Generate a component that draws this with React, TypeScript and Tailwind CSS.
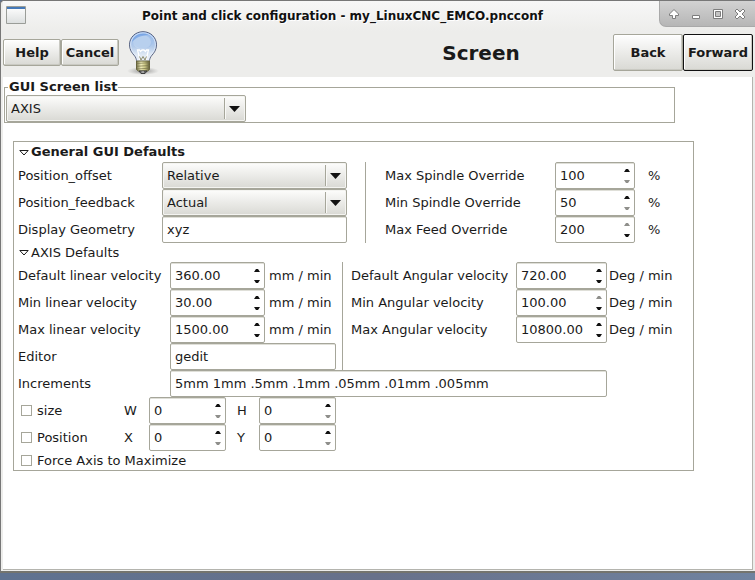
import { useId, useState, type ReactNode } from "react";

const field =
  "h-[27px] rounded-[2px] border border-[#a6a69a] bg-white text-[13px] text-[#1a1a1a] shadow-[inset_0_1px_0_#dfdfd8] outline-none";

function TextField({ label, value, className }: { label: string; value: string; className: string }) {
  const id = useId();
  return (
    <>
      <label htmlFor={id}>{label}</label>
      <input id={id} defaultValue={value} className={`${field} min-w-0 px-1 ${className}`} />
    </>
  );
}

function Dropdown({ id, label, options }: { id?: string; label?: string; options: string[] }) {
  return (
    <div className="relative h-[27px] w-full">
      <select
        id={id}
        aria-label={label}
        className="h-[27px] w-full appearance-none rounded-[2px] border border-[#a6a69a] bg-linear-to-b from-[#fdfdfc] to-[#d9d9d4] pr-6 pl-1 text-[13px] text-[#1a1a1a] shadow-[inset_0_0_0_1px_#f4f4f1] outline-none"
      >
        {options.map((o) => (
          <option key={o}>{o}</option>
        ))}
      </select>
      <svg className="pointer-events-none absolute top-0 right-0" width="22" height="27" aria-hidden="true">
        <path d="M.5 3v21" stroke="#a6a69a" />
        <path d="M1.5 3v21" stroke="#f8f8f6" />
        <path d="M5 11h11l-5.5 6z" fill="#111" />
      </svg>
    </div>
  );
}

type SpinProps = { id: string; value: number; min?: number; max?: number; step?: number; digits?: number };

function Spin({ id, value, min = 0, max = 99999, step = 1, digits = 0 }: SpinProps) {
  const [text, setText] = useState(value.toFixed(digits));
  const current = Number(text) || 0;
  const move = (d: number) => setText(Math.min(max, Math.max(min, current + d)).toFixed(digits));
  const arrow = "flex h-[11px] w-[14px] items-center justify-center text-[#111] disabled:text-[#8f8f8b]";
  return (
    <div className={`${field} flex w-full items-center`}>
      <input
        id={id}
        inputMode="decimal"
        value={text}
        onChange={(e) => setText(e.target.value)}
        className="h-full w-0 min-w-0 flex-1 bg-transparent pl-1 outline-none"
      />
      <div className="flex flex-col">
        <button type="button" tabIndex={-1} aria-label="Increase" disabled={current >= max} onClick={() => move(step)} className={arrow}>
          <svg width="6" height="3" aria-hidden="true">
            <path d="M0 3h6L4 0H2z" fill="currentColor" />
          </svg>
        </button>
        <button type="button" tabIndex={-1} aria-label="Decrease" disabled={current <= min} onClick={() => move(-step)} className={arrow}>
          <svg width="6" height="3" aria-hidden="true">
            <path d="M0 0h6L4 3H2z" fill="currentColor" />
          </svg>
        </button>
      </div>
    </div>
  );
}

function SpinField({ label, unit, ...rest }: { label: string; unit?: string } & Omit<SpinProps, "id">) {
  const id = useId();
  return (
    <>
      <label htmlFor={id}>{label}</label>
      <Spin id={id} {...rest} />
      {unit && <span>{unit}</span>}
    </>
  );
}

function SelectField({ label, options }: { label: string; options: string[] }) {
  const id = useId();
  return (
    <>
      <label htmlFor={id}>{label}</label>
      <Dropdown id={id} options={options} />
    </>
  );
}

function Check({ label }: { label: string }) {
  return (
    <label className="flex items-center gap-[5px] pl-[3px]">
      <input
        type="checkbox"
        className="size-[11px] appearance-none border border-[#a6a69a] bg-white checked:bg-[#555]"
      />
      {label}
    </label>
  );
}

function Expander({ title, bold, children }: { title: string; bold?: boolean; children: ReactNode }) {
  const [open, setOpen] = useState(true);
  return (
    <>
      <button
        type="button"
        aria-expanded={open}
        onClick={() => setOpen(!open)}
        className={`flex items-center gap-[2px] pl-px ${bold ? "h-5 font-bold" : "h-[19px]"}`}
      >
        <svg width="10" height="7" className={open ? "" : "-rotate-90"} aria-hidden="true">
          <path d="M.8 1.500h8.400L5 6z" fill="#fff" stroke="#1a1a1a" />
        </svg>
        {title}
      </button>
      {open && children}
    </>
  );
}

function Bulb() {
  return (
    <svg width="32" height="44" viewBox="0 0 32 44" aria-hidden="true">
      <defs>
        <linearGradient id="glass" x1="0" y1="0" x2="0" y2="1">
          <stop offset="0" stopColor="#8db4ea" />
          <stop offset="0.5" stopColor="#b3cbea" />
          <stop offset="0.75" stopColor="#dde7f3" />
          <stop offset="1" stopColor="#f4f6fa" />
        </linearGradient>
        <linearGradient id="brass" x1="0" y1="0" x2="1" y2="0">
          <stop offset="0" stopColor="#77744a" />
          <stop offset="0.35" stopColor="#f1eebb" />
          <stop offset="0.65" stopColor="#c9c583" />
          <stop offset="1" stopColor="#5f5c38" />
        </linearGradient>
        <radialGradient id="shade">
          <stop offset="0" stopColor="#666" stopOpacity="0.7" />
          <stop offset="1" stopColor="#888" stopOpacity="0" />
        </radialGradient>
      </defs>
      <ellipse cx="16" cy="40" rx="16" ry="4" fill="url(#shade)" />
      <path
        d="M16 .7C8.300.7 2.500 6.500 2.500 13.800c0 5.200 2.700 8.400 5 11 1.200 1.400 1.800 2.900 2 4.700q.2 1.300 1.500 1.300h10q1.300 0 1.500-1.300c.2-1.800.8-3.300 2-4.700 2.300-2.600 5-5.800 5-11C29.500 6.500 23.700.7 16 .7z"
        fill="url(#glass)"
        stroke="#56617f"
      />
      <path
        d="M16 1.800C9 1.800 3.600 7.200 3.600 13.800c0 4.800 2.400 7.700 4.700 10.300 1.300 1.500 2 3.200 2.200 5.100h11c.2-1.900.9-3.600 2.200-5.100 2.300-2.600 4.700-5.500 4.700-10.300C28.400 7.200 23 1.800 16 1.800z"
        fill="none"
        stroke="#e4eefc"
        strokeOpacity="0.75"
      />
      <path d="M6 12C6.500 6.500 11 3 16 3s9.500 3.500 10 9c-2.500 4-6 5.500-10 5.500S8.500 16 6 12z" fill="#a5c3ea" />
      <ellipse cx="15" cy="11" rx="9" ry="7" fill="#fff" fillOpacity="0.22" />
      <path d="M5 11C6.500 5.500 11 2.800 16 2.800c2 0 4 .5 5.500 1.300C14 4.500 8.500 7 5 11z" fill="#5a8fe0" fillOpacity="0.55" />
      <path d="M13 29l-2.500-10h2l1 1.500L15 19h2l1.500 1.500 1-1.500h2L19 29" fill="none" stroke="#fff" strokeWidth="1.300" />
      <path d="M12.500 25.500l1.500 3.500 2-3.500 2 3.500 1.500-3.500" fill="none" stroke="#77754e" strokeOpacity="0.8" />
      <path d="M9.500 30h13v8.500l-2 1.500h-9l-2-1.500z" fill="url(#brass)" stroke="#65623c" />
      <path d="M9.500 32.500l13-.8M9.500 35.300l13-.8M9.500 38l13-.8" stroke="#77744a" strokeOpacity="0.7" />
      <path d="M12 40h8l-2 2.500h-4z" fill="#6d6d6d" stroke="#3d3d3d" />
      <path d="M14.500 41h2.500" stroke="#ddd" />
    </svg>
  );
}

function TitleButton({ label, children }: { label: string; children: ReactNode }) {
  return (
    <button type="button" aria-label={label} className="flex w-[22px] items-end justify-center pb-1">
      <svg width="16" height="16" fill="#fff" stroke="#7d7d7d" aria-hidden="true">
        {children}
      </svg>
    </button>
  );
}

const toolButton =
  "rounded-[2px] border bg-linear-to-b from-[#fefefe] to-[#d9d9d4] text-[13px] font-bold shadow-[inset_-1px_-1px_0_#c9c9c2,inset_1px_1px_0_#fff]";

export default function App() {
  return (
    <div className="flex min-h-screen flex-col bg-linear-to-r from-[#5f7290] via-[#68718a] to-[#7083a0] pb-[7px] font-['DejaVu_Sans','Liberation_Sans',sans-serif] text-[13px] leading-4 text-[#1a1a1a]">
      <div className="flex flex-1 flex-col rounded-t-[4px] border-t border-b-2 border-l border-t-[#777] border-b-[#74746e] border-l-[#777] bg-[#ededeb] pl-[2px]">
        <header className="flex h-[30px] items-start bg-linear-to-b from-[#f7f7f7] to-[#ededeb]">
          <svg width="20" height="18" className="mt-[5px] ml-[3px] shrink-0" aria-hidden="true">
            <defs>
              <linearGradient id="win" x1="0" y1="0" x2="0" y2="1">
                <stop offset="0" stopColor="#fff" />
                <stop offset="1" stopColor="#dcdfdf" />
              </linearGradient>
            </defs>
            <path d="M.5.5h19v17H.5z" fill="url(#win)" stroke="#9a9d98" />
            <path d="M1 1h18v2H1z" fill="#4478b8" />
          </svg>
          <h1 className="mt-[7px] flex-1 text-center text-[12px] font-bold text-[#111] [text-shadow:1px_1px_0_#fff]">
            Point and click configuration - my_LinuxCNC_EMCO.pncconf
          </h1>
          <div className="flex h-[26px] shrink-0 rounded-bl-[7px] border-b border-l border-[#a9a9a9] bg-linear-to-b from-[#d2d2d2] to-[#b6b6b6] pr-1 pl-[3px]">
            <TitleButton label="Shade">
              <path d="M8 3.500L3.500 8v1.500h3v3h3v-3h3V8z" />
            </TitleButton>
            <TitleButton label="Minimize">
              <path d="M4.500 9.500h7v3h-7z" />
            </TitleButton>
            <TitleButton label="Maximize">
              <path d="M3.500 3.500h9v9h-9zM5.500 5.500h5v5h-5z" />
              <path d="M6 6h4v4H6z" fill="#c4c4c4" stroke="none" />
            </TitleButton>
            <TitleButton label="Close">
              <path d="M5 3L3 5l3 3-3 3 2 2 3-3 3 3 2-2-3-3 3-3-2-2-3 3z" />
            </TitleButton>
          </div>
        </header>

        <div className="flex h-[46px] items-center pr-[2px] pb-[3px]">
          <button type="button" className={`${toolButton} h-[27px] w-[58px] shrink-0 border-[#a6a69a]`}>Help</button>
          <button type="button" className={`${toolButton} h-[27px] w-[58px] shrink-0 border-[#a6a69a]`}>Cancel</button>
          <div className="ml-2 shrink-0">
            <Bulb />
          </div>
          <h2 className="flex-1 pl-[190px] text-center text-[20px] leading-6 font-bold">Screen</h2>
          <button type="button" className={`${toolButton} h-[37px] w-[70px] shrink-0 border-[#a6a69a]`}>Back</button>
          <button type="button" className={`${toolButton} h-[37px] w-[70px] shrink-0 border-[#111]`}>Forward</button>
        </div>

        <main className="mr-[2px] mb-px flex-1 border-r border-b border-[#b4b4ae] bg-white">
          <fieldset className="mt-[2px] mr-[77px] ml-px border border-[#a6a69a] px-px">
            <legend className="ml-[2px] px-px font-bold">GUI Screen list</legend>
            <div className="w-60 max-w-full">
              <Dropdown label="GUI Screen list" options={["AXIS", "Touchy"]} />
            </div>
          </fieldset>

          <section className="mt-[18px] mr-[58px] ml-[10px] border border-[#a6a69a] pl-1">
            <Expander title="General GUI Defaults" bold>
              <div className="flex">
                <div className="grid grid-cols-[144px_185px] items-center">
                  <SelectField label="Position_offset" options={["Relative", "Machine"]} />
                  <SelectField label="Position_feedback" options={["Actual", "Commanded"]} />
                  <TextField label="Display Geometry" value="xyz" className="w-full" />
                </div>
                <div className="ml-[18px] border-l border-[#a6a69a]" />
                <div className="ml-[19px] grid grid-cols-[170px_80px_1fr] items-center [&>span]:pl-[13px]">
                  <SpinField label="Max Spindle Override" value={100} min={100} max={1000} unit="%" />
                  <SpinField label="Min Spindle Override" value={50} min={50} max={100} unit="%" />
                  <SpinField label="Max Feed Override" value={200} min={0} max={200} unit="%" />
                </div>
              </div>

              <Expander title="AXIS Defaults">
                <div className="flex">
                  <div className="grid grid-cols-[152px_95px_77px] items-center border-r border-[#a6a69a] [&>span]:pl-1">
                    <SpinField label="Default linear velocity" value={360} digits={2} unit="mm / min" />
                    <SpinField label="Min linear velocity" value={30} digits={2} unit="mm / min" />
                    <SpinField label="Max linear velocity" value={1500} digits={2} unit="mm / min" />
                    <TextField label="Editor" value="gedit" className="col-span-2 mr-[6px]" />
                  </div>
                  <div className="ml-2 grid auto-rows-[27px] grid-cols-[165px_91px_1fr] items-center self-start [&>span]:pl-[2px]">
                    <SpinField label="Default Angular velocity" value={720} digits={2} unit="Deg / min" />
                    <SpinField label="Min Angular velocity" value={100} max={100} digits={2} unit="Deg / min" />
                    <SpinField label="Max Angular velocity" value={10800} digits={2} unit="Deg / min" />
                  </div>
                </div>
                <div className="grid grid-cols-[152px_437px] items-center">
                  <TextField label="Increments" value="5mm 1mm .5mm .1mm .05mm .01mm .005mm" className="w-full" />
                </div>
                <div className="grid grid-cols-[106px_25px_77px_33px_77px] items-center [&>label:nth-child(5n+4)]:pl-[11px]">
                  <Check label="size" />
                  <SpinField label="W" value={0} />
                  <SpinField label="H" value={0} />
                  <Check label="Position" />
                  <SpinField label="X" value={0} />
                  <SpinField label="Y" value={0} />
                </div>
                <div className="flex h-[19px] items-center">
                  <Check label="Force Axis to Maximize" />
                </div>
              </Expander>
            </Expander>
          </section>
        </main>
      </div>
    </div>
  );
}
